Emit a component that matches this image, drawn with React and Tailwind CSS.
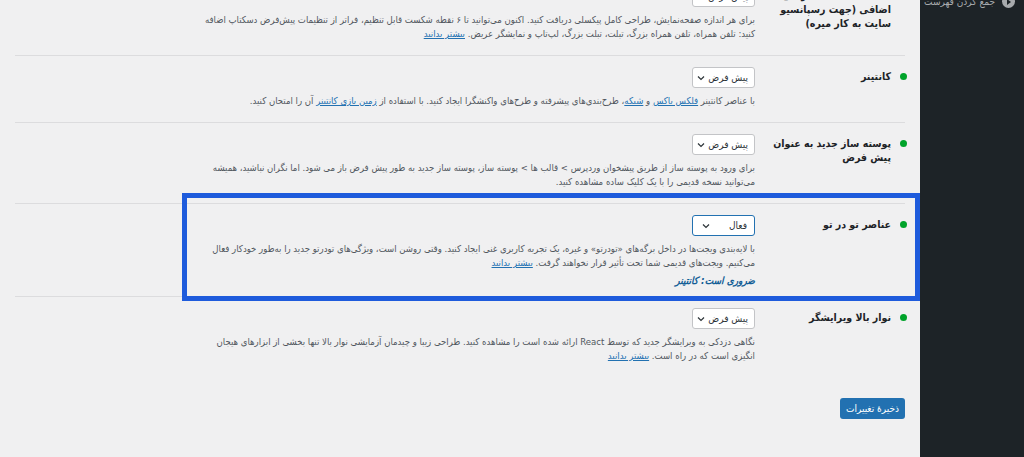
import React from "react";

function Chevron() {
  return (
    <svg width="8" height="6" viewBox="0 0 8 6" className="shrink-0">
      <path d="M1 1.5 L4 4.5 L7 1.5" fill="none" stroke="#2c3338" strokeWidth="1.2" />
    </svg>
  );
}

function Select({ label, active }) {
  if (active) {
    return (
      <div className="flex h-[21px] w-[63px] items-center justify-between whitespace-nowrap rounded-[3px] border border-[#2271b1] bg-white pl-[9px] pr-[7px] text-[10px] text-[#2c3338]">
        <span>{label}</span>
        <Chevron />
      </div>
    );
  }
  return (
    <div className="flex h-[21px] w-[63px] items-center gap-[3px] whitespace-nowrap rounded-[3px] border border-[#c3c4c7] bg-white pr-[6px] text-[10px] text-[#2c3338]">
      <span>{label}</span>
      <Chevron />
    </div>
  );
}

function A({ children }) {
  return <a className="text-[#2271b1] underline">{children}</a>;
}

function Row({ title, select, active, children, extra, border = true }) {
  return (
    <div className={"flex pb-[14px] pt-[11px] " + (border ? "border-b border-[#dcdcde]" : "")}>
      <div className="flex w-[140px] shrink-0 items-start gap-[9px] pt-[2px]">
        <span className="mt-[4px] mr-[-2px] h-[7px] w-[7px] shrink-0 rounded-full bg-[#00a32a]" />
        <div className="whitespace-nowrap text-[10.5px] font-bold leading-[14px] text-[#1d2327]">{title}</div>
      </div>
      <div className="pr-[10px]">
        <Select label={select} active={active} />
        <div className="mt-[6px] whitespace-nowrap text-[9.5px] leading-[14px] text-[#50575e]">{children}</div>
        {extra}
      </div>
    </div>
  );
}

export default function App() {
  return (
    <div dir="rtl" className="flex h-[457px] w-[1024px] overflow-hidden bg-[#f0f0f1] font-['DejaVu_Sans_Condensed','DejaVu_Sans',sans-serif]">
      <aside className="w-[104px] shrink-0 bg-[#1d2327]">
        <div className="-mt-[6px] flex items-center gap-[7px] whitespace-nowrap pr-[9px] text-[10px] text-[#a7aaad]">
          <span className="flex h-[13px] w-[13px] shrink-0 items-center justify-center rounded-full bg-[#a7aaad]">
            <span className="h-0 w-0 border-y-[3px] border-l-[4px] border-y-transparent border-l-[#1d2327]" />
          </span>
          <span>جمع کردن فهرست</span>
        </div>
      </aside>
      <main className="relative flex-1 px-[15px]">
        <div className="-mt-[25px]">
          <Row
            title={<>نقاط شکست سفارشی<br />اضافی (جهت رسپانسیو<br />سایت به کار میره)</>}
            select="پیش فرض"
          >
            برای هر اندازه صفحه‌نمایش، طراحی کامل پیکسلی دریافت کنید. اکنون می‌توانید تا ۶ نقطه شکست قابل تنظیم، فراتر از تنظیمات پیش‌فرض دسکتاپ اضافه
            <br />
            کنید: تلفن همراه، تلفن همراه بزرگ، تبلت، تبلت بزرگ، لپ‌تاپ و نمایشگر عریض. <A>بیشتر بدانید</A>
          </Row>
          <Row title="کانتینر" select="پیش فرض">
            با عناصر کانتینر <A>فلکس باکس</A> و <A>شبکه</A>، طرح‌بندی‌های پیشرفته و طرح‌های واکنشگرا ایجاد کنید. با استفاده از <A>زمین بازی کانتینر</A> آن را امتحان کنید.
          </Row>
          <Row title={<>پوسته ساز جدید به عنوان<br />پیش فرض</>} select="پیش فرض">
            برای ورود به پوسته ساز از طریق پیشخوان وردپرس &gt; قالب ها &gt; پوسته ساز، پوسته ساز جدید به طور پیش فرض باز می شود. اما نگران نباشید، همیشه
            <br />
            می‌توانید نسخه قدیمی را با یک کلیک ساده مشاهده کنید.
          </Row>
          <Row
            title="عناصر تو در تو"
            select="فعال"
            active
            extra={<div className="-mb-[6px] mt-[4px] text-[10px] font-bold italic leading-[14px] text-[#135e96]">ضروری است: کانتینر</div>}
          >
            با لایه‌بندی ویجت‌ها در داخل برگه‌های «تودرتو» و غیره، یک تجربه کاربری غنی ایجاد کنید. وقتی روشن است، ویژگی‌های تودرتو جدید را به‌طور خودکار فعال
            <br />
            می‌کنیم. ویجت‌های قدیمی شما تحت تأثیر قرار نخواهند گرفت. <A>بیشتر بدانید</A>
          </Row>
          <Row title="نوار بالا ویرایشگر" select="پیش فرض" border={false}>
            نگاهی دزدکی به ویرایشگر جدید که توسط React ارائه شده است را مشاهده کنید. طراحی زیبا و چیدمان آزمایشی نوار بالا تنها بخشی از ابزارهای هیجان
            <br />
            انگیزی است که در راه است. <A>بیشتر بدانید</A>
          </Row>
          <div className="mt-[21px] flex">
            <button className="h-[21px] w-[65px] whitespace-nowrap rounded-[3px] bg-[#2271b1] text-[10px] text-white">ذخیرهٔ تغییرات</button>
          </div>
        </div>
        <div className="pointer-events-none absolute left-[182px] top-[193px] h-[108px] w-[738px] border-[5px] border-[#1e5bdc]" />
      </main>
    </div>
  );
}
